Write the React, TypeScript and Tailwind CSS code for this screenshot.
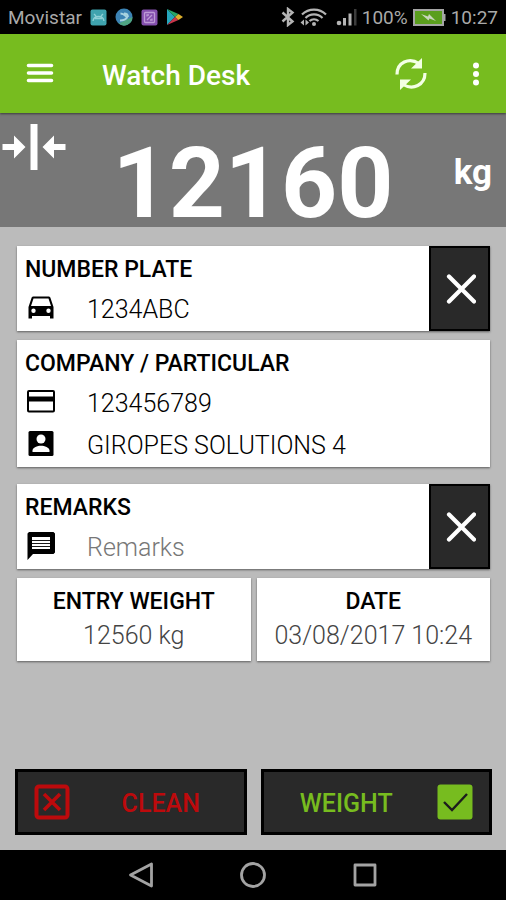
import React, { useState } from 'react';

type IconProps = { className?: string };

function CarIcon({ className }: IconProps) {
  return (
    <svg className={className} viewBox="0 0 32 32" fill="currentColor">
      <path
        fillRule="evenodd"
        d="M8.500 4.500h15c1 0 1.700.5 2 1.500L28.500 15v11.500h-3.500V24h-18v2.500H3.500V15l3-9c.3-1 1-1.500 2-1.500zM8.500 6.500L6 14h20l-2.500-7.500zM8.500 16.500a2.200 2.200 0 1 0 0 4.400 2.200 2.200 0 0 0 0-4.400zM23.500 16.500a2.200 2.200 0 1 0 0 4.400 2.200 2.200 0 0 0 0-4.400z"
      />
    </svg>
  );
}

function CardIcon({ className }: IconProps) {
  return (
    <svg className={className} viewBox="0 0 32 32">
      <rect x="3" y="5" width="26" height="20.500" rx="1" fill="none" stroke="currentColor" strokeWidth="2" />
      <path d="M3 10.500h26v5H3z" fill="currentColor" />
    </svg>
  );
}

function PersonIcon({ className }: IconProps) {
  return (
    <svg className={className} viewBox="0 0 32 32">
      <rect x="3.500" y="3" width="25" height="25" rx="1.500" fill="currentColor" />
      <circle cx="16" cy="11" r="4.500" fill="white" />
      <path d="M7.500 24v-1.500c0-3 5-4.800 8.500-4.800s8.500 1.800 8.500 4.800V24z" fill="white" />
    </svg>
  );
}

function MessageIcon({ className }: IconProps) {
  return (
    <svg className={className} viewBox="0 0 32 32">
      <path d="M4 2h24.500l1.500 1.500v19L28.500 24H8l-5.500 6V3.500z" fill="currentColor" />
      <path d="M7 7h18v12H7z" fill="white" />
      <path d="M7 10.500h18M7 13.500h18M7 16.500h18" stroke="currentColor" strokeWidth="0.900" />
    </svg>
  );
}

function StatusBar() {
  return (
    <div className="flex h-[34px] items-center justify-between bg-black px-2 text-[19px] text-[#a9a9a9]">
      <div className="flex items-center gap-2">
        <span className="pt-[2px]">Movistar</span>
        <svg className="h-[17px] w-[17px]" viewBox="0 0 17 17" fill="none">
          <rect x="0.5" y="0.5" width="16" height="16" rx="2" fill="#3fa3ae" />
          <path d="M4 5l2 2M13 5l-2 2M3 12c1-6 10-6 11 0M5 9.500h7" stroke="#8fd0d6" strokeWidth="1.300" />
        </svg>
        <svg className="h-[18px] w-[18px]" viewBox="0 0 18 18" fill="none">
          <circle cx="9" cy="9" r="8.500" fill="#3c83b4" />
          <path d="M17.500 9a8.500 8.500 0 0 1-14 6.500z" fill="#4fa583" />
          <path d="M5.500 5.500c3 0 4 1.500 6 3.500M5 12.500c4 0 6-1 7.500-3.500M9 5.500c3 0 4 1.500 4 3.500" stroke="#a9d3e0" strokeWidth="1.800" />
        </svg>
        <svg className="h-[17px] w-[17px]" viewBox="0 0 17 17" fill="none">
          <rect x="0.500" y="0.500" width="16" height="16" rx="2" fill="#8550ae" />
          <rect x="3.500" y="3.500" width="10" height="10" rx="1" stroke="#bd9bd5" strokeWidth="1.300" />
          <path d="M6 11l5-5M6 7.500V6h2M11 9.500V11H9" stroke="#bd9bd5" strokeWidth="1.300" />
        </svg>
        <svg className="h-[18px] w-[18px]" viewBox="0 0 18 18">
          <path d="M1 1v16l8-8z" fill="#25a6bd" />
          <path d="M1 1l8 8 3.500-3z" fill="#27a567" />
          <path d="M1 17l8-8 3.500 3z" fill="#c8354a" />
          <path d="M12.500 6L9 9l3.500 3L17 9z" fill="#dcae2c" />
        </svg>
      </div>
      <div className="flex items-center gap-[5px]">
        <svg className="h-[20px] w-[14px]" viewBox="0 0 14 20" fill="none" stroke="#b4b4b4" strokeWidth="2.400">
          <path d="M1.500 5.500l10 9L7 18v-16l4.500 3.500-10 9" />
        </svg>
        <svg className="h-[20px] w-[27px]" viewBox="0 0 27 20" fill="none">
          <path d="M2 7.500a17 17 0 0 1 24 0M5.500 11a12 12 0 0 1 17 0M9.500 14a7 7 0 0 1 9 0" stroke="#b4b4b4" strokeWidth="2.200" />
          <circle cx="14" cy="17" r="2" fill="#b4b4b4" />
          <path d="M4 12.500v6L0.500 15.500zM5.500 12.500v6L9 15.500z" fill="#b4b4b4" />
        </svg>
        <svg className="ml-1 h-[20px] w-[21px]" viewBox="0 0 21 20">
          <circle cx="3" cy="16" r="2.300" fill="#b4b4b4" />
          <path d="M7 11h3v7.500H7zM12.500 6.500h3v12h-3z" fill="#b4b4b4" />
          <path d="M18 2h2.500v16.500H18z" fill="#3c3c3c" />
        </svg>
        <span className="pt-[2px]">100%</span>
        <svg className="h-[17px] w-[33px]" viewBox="0 0 33 17">
          <path d="M29 5h3.500v7H29z" fill="#a5a5a5" />
          <rect x="1" y="1" width="29" height="15" fill="#5a9e1d" stroke="#a5a5a5" strokeWidth="2" />
          <path d="M8 5l7 2.500 1-2.500 7 7-6.500-2.500-1 2z" fill="#c9d6bd" />
        </svg>
        <span className="pt-[2px]">10:27</span>
      </div>
    </div>
  );
}

function AppBar() {
  return (
    <header className="z-10 flex h-[79px] items-center bg-[#77bc1f] pr-6 pl-[26px] text-white shadow-[0_1px_2px_rgba(0,0,0,0.5)]">
      <button type="button" aria-label="Menu">
        <svg className="h-7 w-7" viewBox="0 0 28 28" stroke="currentColor" strokeWidth="3.600" strokeLinecap="round">
          <path d="M2.500 5.500h23M2.500 13h23M2.500 20.500h23" />
        </svg>
      </button>
      <h1 className="ml-12 flex-1 pt-1 text-[28px] font-medium">Watch Desk</h1>
      <button type="button" aria-label="Refresh">
        <svg className="h-[34px] w-[34px]" viewBox="0 0 34 34" fill="none">
          <path d="M3 17.500C3 5.500 15 0 25 6.500M31 16C31 28 19 33.500 9 27.500" stroke="#f3ffe4" strokeWidth="3.200" />
          <path d="M28 1v10.500H17zM6 33V22.500h11z" fill="#f3ffe4" />
        </svg>
      </button>
      <button type="button" aria-label="More options" className="ml-[42px]">
        <svg className="h-6 w-3" viewBox="0 0 12 24" fill="currentColor">
          <circle cx="6" cy="3.500" r="3" />
          <circle cx="6" cy="12" r="3" />
          <circle cx="6" cy="20.500" r="3" />
        </svg>
      </button>
    </header>
  );
}

function WeightDisplay() {
  return (
    <section className="grid h-[114px] grid-cols-[1fr_auto_1fr] bg-[#777777] text-white">
      <svg className="mt-[10px] ml-[2px] h-[48px] w-[64px]" viewBox="0 0 64 48" fill="currentColor">
        <path d="M28.500 1h7v46h-7z" />
        <path d="M0.500 21H12v-8.500L23.500 24 12 35.500V27H0.500z" />
        <path d="M63.500 21H52v-8.500L40.500 24 52 35.500V27h11.500z" />
      </svg>
      <p className="pt-[14px] text-[98px] leading-[114px] font-bold">12160</p>
      <p className="pt-[38px] pr-[14px] text-right text-[35px] leading-[44px] font-bold">kg</p>
    </section>
  );
}

function ClearButton({ label, onClick }: { label: string; onClick: () => void }) {
  return (
    <button
      type="button"
      aria-label={label}
      onClick={onClick}
      className="flex w-[61px] items-center justify-center border-2 border-black bg-[#292929]"
    >
      <svg className="h-8 w-8" viewBox="0 0 32 32" stroke="white" strokeWidth="4.200" strokeLinecap="round">
        <path d="M5 3.500l25 25M30 3.500l-25 25" />
      </svg>
    </button>
  );
}

type FieldProps = {
  id: string;
  icon: React.ComponentType<IconProps>;
  value: string;
  onChange: (value: string) => void;
  placeholder?: string;
  ariaLabel?: string;
};

function Field({ id, icon: Icon, value, onChange, placeholder, ariaLabel }: FieldProps) {
  return (
    <div className="flex h-[42px] items-center">
      <Icon className="h-8 w-8 shrink-0 text-black" />
      <input
        id={id}
        type="text"
        aria-label={ariaLabel}
        value={value}
        placeholder={placeholder}
        onChange={(e) => onChange(e.target.value)}
        className="ml-[30px] min-w-0 flex-1 bg-transparent pt-1 text-[25px] font-light text-black outline-none placeholder:text-[#777777]"
      />
    </div>
  );
}

const card = 'bg-white shadow-[0_1px_2px_rgba(0,0,0,0.5)]';
const cardLabel = 'block text-[23px] leading-[34px] font-medium text-black';

export default function App() {
  const [plate, setPlate] = useState('1234ABC');
  const [companyId, setCompanyId] = useState('123456789');
  const [company, setCompany] = useState('GIROPES SOLUTIONS 4');
  const [remarks, setRemarks] = useState('');

  const summary = [
    { label: 'ENTRY WEIGHT', value: '12560 kg' },
    { label: 'DATE', value: '03/08/2017 10:24' },
  ];

  return (
    <div className="flex min-h-screen flex-col bg-[#bbbbbb] font-[Roboto,sans-serif]">
      <StatusBar />
      <AppBar />
      <WeightDisplay />

      <main className="flex flex-1 flex-col pt-[19px] pr-4 pb-[15px] pl-[17px]">
        <div className={`flex ${card}`}>
          <div className="min-w-0 flex-1 px-2 pt-[7px] pb-[2px]">
            <label htmlFor="plate" className={cardLabel}>NUMBER PLATE</label>
            <Field id="plate" icon={CarIcon} value={plate} onChange={setPlate} />
          </div>
          <ClearButton label="Clear number plate" onClick={() => setPlate('')} />
        </div>

        <div className={`mt-[9px] px-2 pt-[7px] pb-[2px] ${card}`}>
          <label htmlFor="company-id" className={cardLabel}>COMPANY / PARTICULAR</label>
          <Field id="company-id" icon={CardIcon} value={companyId} onChange={setCompanyId} />
          <Field id="company" icon={PersonIcon} value={company} onChange={setCompany} ariaLabel="Company name" />
        </div>

        <div className={`mt-[17px] flex ${card}`}>
          <div className="min-w-0 flex-1 px-2 pt-[7px] pb-[2px]">
            <label htmlFor="remarks" className={cardLabel}>REMARKS</label>
            <Field id="remarks" icon={MessageIcon} value={remarks} onChange={setRemarks} placeholder="Remarks" />
          </div>
          <ClearButton label="Clear remarks" onClick={() => setRemarks('')} />
        </div>

        <dl className="mt-[9px] grid grid-cols-2 gap-[6px]">
          {summary.map((item) => (
            <div key={item.label} className={`pt-[7px] pb-2 text-center ${card}`}>
              <dt className={cardLabel}>{item.label}</dt>
              <dd className="text-[25px] leading-[34px] font-light text-[#444444]">{item.value}</dd>
            </div>
          ))}
        </dl>

        <div className="-mx-[2px] mt-auto grid grid-cols-2 gap-[14px]">
          <button type="button" className="flex h-[66px] items-center border-[3px] border-black bg-[#292929] px-4">
            <svg className="h-9 w-9" viewBox="0 0 36 36" fill="none" stroke="#bd0a0c">
              <rect x="2.500" y="2.500" width="31" height="31" rx="2.500" strokeWidth="4" />
              <path d="M10 10l16 16M26 10L10 26" strokeWidth="3.600" />
            </svg>
            <span className="flex-1 pt-1 pl-6 text-center text-[25px] font-medium text-[#bd0a0c]">CLEAN</span>
          </button>
          <button type="button" className="flex h-[66px] items-center border-[3px] border-black bg-[#292929] px-4">
            <span className="flex-1 pt-1 pr-6 text-center text-[25px] font-medium text-[#77bc1f]">WEIGHT</span>
            <svg className="h-9 w-9" viewBox="0 0 36 36" fill="none">
              <rect x="0.500" y="0.500" width="35" height="35" rx="3" fill="#77bc1f" />
              <path d="M7 18l8 8L30 10" stroke="#1d1d1d" strokeWidth="2.400" />
            </svg>
          </button>
        </div>
      </main>

      <nav className="flex h-[50px] items-center justify-center gap-[84px] bg-black">
        <button type="button" aria-label="Back">
          <svg className="h-7 w-7" viewBox="0 0 28 28" fill="none" stroke="#a3a3a3" strokeWidth="2.800" strokeLinejoin="round">
            <path d="M24.500 3v22L3.500 14z" />
          </svg>
        </button>
        <button type="button" aria-label="Home">
          <svg className="h-7 w-7" viewBox="0 0 28 28" fill="none" stroke="#a3a3a3" strokeWidth="2.800">
            <circle cx="14" cy="14" r="11.500" />
          </svg>
        </button>
        <button type="button" aria-label="Recent apps">
          <svg className="h-7 w-7" viewBox="0 0 28 28" fill="none" stroke="#a3a3a3" strokeWidth="2.800" strokeLinejoin="round">
            <rect x="4" y="4" width="20" height="20" />
          </svg>
        </button>
      </nav>
    </div>
  );
}
